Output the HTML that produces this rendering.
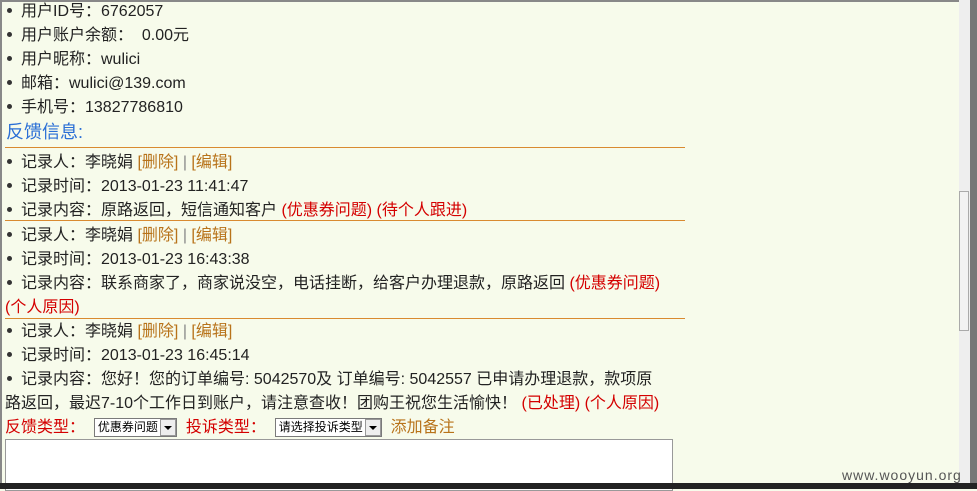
<!DOCTYPE html>
<html><head><meta charset="utf-8"><style>
body{margin:0;width:977px;height:489px;overflow:hidden;background:#f7fbeb;font-family:"Liberation Sans","Noto Sans CJK SC",sans-serif;font-size:16px;color:#222;position:relative}
.w{position:absolute;left:0;top:2px;width:977px;height:489px}
.l{position:absolute;left:7px;white-space:nowrap;line-height:20px}
.b::before{content:"";display:inline-block;width:5px;height:5px;border-radius:50%;background:#333;margin:0 9px 3px 0;vertical-align:middle}
.o{color:#b8731a}.r{color:#d40000}.g{color:#888}
.hr{position:absolute;left:5px;width:680px;height:1px;background:#d98a30}
.sel{display:inline-block;border:1px solid #7a7a7a;background:#fff;font-size:12px;height:17px;line-height:17px;padding-left:3px;vertical-align:middle;color:#000}
.sel i{display:inline-block;width:14px;height:15px;border:1px solid #999;background:#eee;vertical-align:top;margin-left:2px;position:relative}
.sel i::after{content:"";position:absolute;left:3px;top:6px;border:4px solid transparent;border-top:4px solid #000}
</style></head><body>
<div class="w">
<div class="l b" style="top:0">用户ID号：6762057</div>
<div class="l b" style="top:24px">用户账户余额：&nbsp; 0.00元</div>
<div class="l b" style="top:48px">用户昵称：wulici</div>
<div class="l b" style="top:72px">邮箱：wulici@139.com</div>
<div class="l b" style="top:96px">手机号：13827786810</div>
<div class="l" style="top:120px;left:6px;color:#2a6fd6;font-size:18px">反馈信息:</div>
<div class="hr" style="top:145px"></div>
<div class="l b" style="top:151px">记录人：李晓娟 <span class="o">[删除]</span> <span class="g">|</span> <span class="o">[编辑]</span></div>
<div class="l b" style="top:175px">记录时间：2013-01-23 11:41:47</div>
<div class="l b" style="top:199px">记录内容：原路返回，短信通知客户 <span class="r">(优惠券问题) (待个人跟进)</span></div>
<div class="hr" style="top:218px"></div>
<div class="l b" style="top:224px">记录人：李晓娟 <span class="o">[删除]</span> <span class="g">|</span> <span class="o">[编辑]</span></div>
<div class="l b" style="top:248px">记录时间：2013-01-23 16:43:38</div>
<div class="l b" style="top:272px">记录内容：联系商家了，商家说没空，电话挂断，给客户办理退款，原路返回 <span class="r">(优惠券问题)</span></div>
<div class="l r" style="top:296px;left:5px">(个人原因)</div>
<div class="hr" style="top:316px"></div>
<div class="l b" style="top:320px">记录人：李晓娟 <span class="o">[删除]</span> <span class="g">|</span> <span class="o">[编辑]</span></div>
<div class="l b" style="top:344px">记录时间：2013-01-23 16:45:14</div>
<div class="l b" style="top:368px">记录内容：您好！您的订单编号: 5042570及 订单编号: 5042557 已申请办理退款，款项原</div>
<div class="l" style="top:392px;left:5px">路返回，最迟7-10个工作日到账户，请注意查收！团购王祝您生活愉快！ <span class="r">(已处理) (个人原因)</span></div>
<div class="l" style="top:416px;left:5px"><span class="r">反馈类型：</span>&nbsp;&nbsp;<span class="sel">优惠券问题<i></i></span>&nbsp;&nbsp;<span class="r">投诉类型：</span>&nbsp;&nbsp;<span class="sel">请选择投诉类型<i></i></span>&nbsp;&nbsp;<span class="o">添加备注</span></div>
<div style="position:absolute;left:5px;top:437px;width:666px;height:50px;background:#fff;border:1px solid #999"></div>
</div>
<div style="position:absolute;left:0;top:0;width:977px;height:2px;background:#888"></div>
<div style="position:absolute;left:0;top:0;width:2px;height:489px;background:#888"></div>
<div style="position:absolute;left:959px;top:0;width:11px;height:489px;background:#eee"></div>
<div style="position:absolute;left:959px;top:191px;width:10px;height:140px;background:#f2f2f2;border:1px solid #aaa;box-sizing:border-box"></div>
<div style="position:absolute;left:970px;top:0;width:7px;height:489px;background:#777"></div>
<div style="position:absolute;left:0;top:483px;width:977px;height:6px;background:#222"></div>
<div style="position:absolute;left:842px;top:467px;color:#555;font-size:14px;letter-spacing:1px">www.wooyun.org</div>
</body></html>
